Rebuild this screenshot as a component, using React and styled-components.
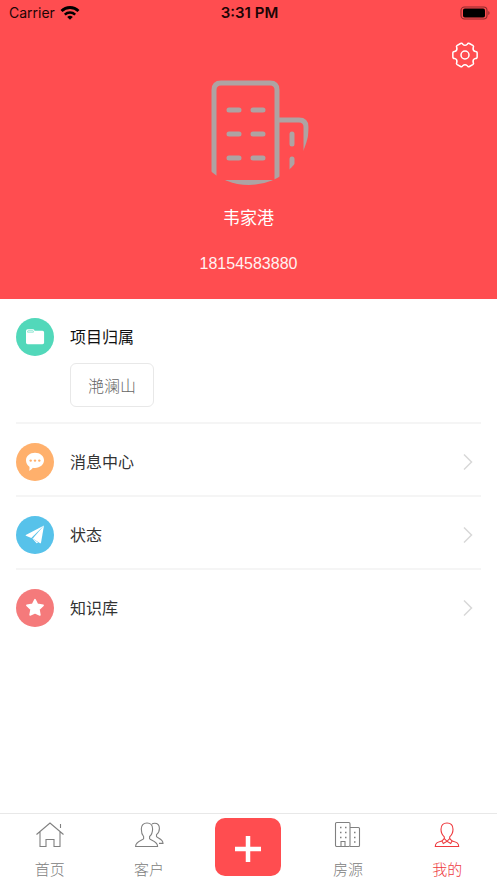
import React from "react";
import styled, { createGlobalStyle } from "styled-components";

const GlobalStyle = createGlobalStyle`
  * {
    box-sizing: border-box;
  }
  body {
    margin: 0;
    background: #fff;
    font-family: "Liberation Sans", "Noto Sans CJK SC", sans-serif;
  }
  button {
    font-family: inherit;
    border: none;
    background: none;
    padding: 0;
    cursor: pointer;
  }
  svg {
    display: block;
  }
`;

const Page = styled.div`
  min-height: 100vh;
  display: flex;
  flex-direction: column;
`;

const Header = styled.header`
  background: #ff4d50;
  color: #fff;
  padding-bottom: 23px;
`;

const StatusBar = styled.div`
  display: grid;
  grid-template-columns: 1fr auto 1fr;
  align-items: center;
  height: 25px;
  padding: 0 7px 0 9px;
  color: #1c0506;
  font-family: Inter, sans-serif;
  font-size: 14px;
`;

const Carrier = styled.span`
  display: flex;
  align-items: center;
  gap: 5px;
`;

const Clock = styled.span`
  font-size: 15px;
  font-weight: 600;
`;

const Battery = styled.span`
  justify-self: end;
`;

const Toolbar = styled.div`
  display: flex;
  justify-content: flex-end;
  align-items: flex-start;
  height: 40px;
  padding: 16px 18px 0 0;
`;

const Profile = styled.div`
  display: flex;
  flex-direction: column;
  align-items: center;
`;

const Name = styled.div`
  margin-top: 21px;
  font-size: 17px;
  line-height: 26px;
`;

const Phone = styled.div`
  margin-top: 20px;
  font-size: 16px;
  line-height: 24px;
  color: #fff2f2;
`;

const Menu = styled.main`
  flex: 1;
  padding: 0 16px;
`;

const Section = styled.section`
  padding: 19px 0 15px;
  border-bottom: 2px solid #f5f5f5;
`;

const Row = styled.div`
  display: flex;
  align-items: center;
  gap: 16px;
  width: 100%;
`;

const MenuRow = styled(Row).attrs({ as: "button", type: "button" })`
  padding: 19px 8px 14px 0;
  border-bottom: 2px solid ${(p) => (p.$last ? "transparent" : "#f5f5f5")};
`;

const Badge = styled.span`
  display: flex;
  align-items: center;
  justify-content: center;
  width: 38px;
  height: 38px;
  border-radius: 50%;
  background: ${(p) => p.$color};
`;

const Label = styled.span`
  flex: 1;
  padding-top: 2px;
  text-align: left;
  font-size: 16px;
  line-height: 24px;
  color: ${(p) => (p.$dark ? "#111" : "#333")};
`;

const Project = styled.button`
  display: block;
  height: 44px;
  margin: 7px 0 0 54px;
  && {
    padding: 0 17px;
    border: 1px solid #e8e8e8;
  }
  border-radius: 6px;
  font-size: 16px;
  font-weight: 300;
  color: #666;
`;

const TabBar = styled.nav`
  display: grid;
  grid-template-columns: repeat(5, 1fr);
  height: 70px;
  border-top: 1px solid #e8e8e8;
`;

const Tab = styled.button`
  display: flex;
  flex-direction: column;
  align-items: center;
  justify-content: flex-start;
  gap: 9px;
  && {
    padding-top: 7px;
  }
  font-size: 15px;
  font-weight: 300;
  line-height: 24px;
  color: ${(p) => (p.$active ? "#ee3a3e" : "#808080")};
`;

const AddButton = styled.button`
  display: flex;
  align-items: center;
  justify-content: center;
  justify-self: center;
  width: 66px;
  height: 58px;
  margin-top: 4px;
  && {
    padding-top: 4px;
    background: #ff4d50;
  }
  border-radius: 10px;
`;

const WifiIcon = () => (
  <svg width="20" height="14" viewBox="0 0 20 14" fill="none" stroke="#000" strokeWidth="2.8">
    <path d="M1.5 5a12.1 12.1 0 0 1 17 0" />
    <path d="M4.8 8.700a7.400 7.400 0 0 1 10.400 0" strokeWidth="2.400" />
    <path d="M10 13.800l-2.800-2.800a4 4 0 0 1 5.600 0z" fill="#000" stroke="none" />
  </svg>
);

const BatteryIcon = () => (
  <svg width="30" height="14" viewBox="0 0 30 14">
    <rect x="1" y="1" width="26" height="12" rx="3.5" fill="none" stroke="#8f2b2d" strokeWidth="1.1" />
    <rect x="3" y="2.500" width="22" height="9" rx="1.8" fill="#000" />
    <path d="M28.300 5v4c1.700-.6 1.700-3.400 0-4z" fill="#8f2b2d" />
  </svg>
);

const polar = (r, deg) => {
  const a = (deg * Math.PI) / 180;
  return `${(r * Math.cos(a)).toFixed(2)} ${(r * Math.sin(a)).toFixed(2)}`;
};

// six rounded teeth around the hub
const gearPath =
  [0, 60, 120, 180, 240, 300]
    .map(
      (t, i) =>
        `${i ? "L" : "M"}${polar(11, t - 18)}Q${polar(12.6, t - 16)} ${polar(12.3, t - 9)}` +
        `L${polar(12.3, t + 9)}Q${polar(12.6, t + 16)} ${polar(11, t + 18)}` +
        `Q${polar(8.6, t + 30)} ${polar(11, t + 42)}`
    )
    .join("") + "Z";

const GearIcon = () => (
  <svg width="28" height="28" viewBox="-14 -14 28 28" fill="none" stroke="#fff" strokeWidth="1.5">
    <path d={gearPath} strokeLinejoin="round" />
    <circle r="4" />
  </svg>
);

const BuildingLogo = () => (
  <svg width="120" height="120" viewBox="0 0 120 120" fill="none" stroke="#aea3a3" strokeWidth="5">
    <clipPath id="avatar">
      <circle cx="60" cy="60" r="60" />
    </clipPath>
    <g clipPath="url(#avatar)">
      <path d="M25 120V25q0-7 7-7h49q7 0 7 7v95" />
      <path d="M25 118h63" strokeWidth="6" />
      <path d="M88 55h22q7 0 7 7v58" />
      <path
        strokeLinecap="round"
        d="M40 45h10M64 45h10M40 69h10M64 69h10M40 93h10M64 93h10M103 69v10M103 94v18"
      />
    </g>
  </svg>
);

const ChevronIcon = () => (
  <svg width="10" height="18" viewBox="0 0 10 18" fill="none" stroke="#d8d8d8" strokeWidth="1.5">
    <path d="M1 1.500l7.500 7.500L1 16.500" />
  </svg>
);

const FolderIcon = () => (
  <svg width="20" height="18" viewBox="0 0 20 18">
    <path d="M1 3q0-1.800 1.600-1.800h5.600q1.300 0 1.300 1.600h8q1.600 0 1.600 1.600v10.400q0 1.400-1.600 1.400H2.600Q1 16.200 1 14.800z" fill="#fff" />
    <path d="M2.600 4.200V3.400q0-.7.7-.7h4.500q.6 0 .6.7v.8z" fill="none" stroke="#52d8ba" strokeWidth=".6" />
  </svg>
);

const ChatIcon = () => (
  <svg width="20" height="20" viewBox="0 0 20 20">
    <path d="M10 .8c5.100 0 9 3.200 9 7.500s-3.900 7.600-9 7.600c-.8 0-1.500-.1-2.200-.2-.8 1.400-2 2.500-3.800 3 .5-1 .7-2.500.4-4C2.300 13.300 1 11 1 8.300 1 4 4.900.8 10 .8z" fill="#fff" />
    <g fill="#ffb06c">
      <circle cx="5.7" cy="8.600" r="1.200" />
      <circle cx="10" cy="8.600" r="1.200" />
      <circle cx="14.300" cy="8.600" r="1.200" />
    </g>
  </svg>
);

const PlaneIcon = () => (
  <svg width="20" height="20" viewBox="0 0 20 20" fill="#fff">
    <path d="M19 .5L.8 10q-.4.4.1.800l5.400 2.200z" />
    <path d="M19 .5L7.800 13.400l7.200 4.800q.8.400 1-.5z" />
    <path d="M6.800 12.800l2.400 1.600 4 3.400-1.600.4z" />
  </svg>
);

const StarIcon = () => (
  <svg width="20" height="20" viewBox="0 0 20 20">
    <path
      d="M10 1.600l2.400 4.800 5.700.9-4.200 4 1 5.700-4.900-2.300-4.900 2.300 1-5.700-4.200-4 5.700-.9z"
      fill="#fff"
      stroke="#fff"
      strokeWidth="1.600"
      strokeLinejoin="round"
    />
  </svg>
);

const TabSvg = styled.svg.attrs({
  width: 30,
  height: 28,
  viewBox: "0 0 30 28",
  fill: "none",
  stroke: "currentColor",
  strokeWidth: 1.1,
})``;

const HomeIcon = () => (
  <TabSvg>
    <path d="M1.500 13.500L15 2l13.500 11.500M5 11v14.500h6v-7h8v7h6V11M25.500 3v4" />
  </TabSvg>
);

const UsersIcon = () => (
  <TabSvg>
    <path d="M13 2c3.600 0 5.600 2.400 5.600 6 0 3-.9 5.700-3 7.500v2.300c1 1.700 8 2.400 8 7.700h-22c0-5.300 7-6 8-7.700v-2.300C8 13.700 7.300 11 7.300 8c0-3.600 2.100-6 5.700-6z" />
    <path d="M18 3c.8-.6 1.700-.8 2.600-.8 3.300 0 4.800 2.200 4.800 5.400 0 2.700-.9 4.600-2.900 6v2c.8 1.500 6.500 2.300 6.500 6.800h-4" />
  </TabSvg>
);

const HousesIcon = () => (
  <TabSvg>
    <rect x="2.500" y="1.500" width="14.500" height="24" rx="1.200" />
    <path d="M17 6.500h8.500q1 0 1 1v17q0 1-1 1H17M8 25.500v-5h4v5" />
    <path
      strokeWidth="1.500"
      d="M7 6.500h1.500M12 6.500h1.500M7 11.500h1.500M12 11.500h1.500M7 16.500h1.500M12 16.500h1.500M21 11.500h1.500M21 16.500h1.500M21 21h1.500"
    />
  </TabSvg>
);

const MeIcon = () => (
  <TabSvg>
    <path d="M12.300 17.600v-1.700c-2-1.800-3.300-4.500-3.300-7.600C9 4.500 11.200 2 15 2s6 2.500 6 6.300c0 3.100-1.300 5.800-3.300 7.600v1.700L15 20.300z" />
    <path d="M12.300 17.600l-2.300 2.300 1.300 2.600 3.700-2.200 3.700 2.200 1.300-2.600-2.300-2.300M10 19.900c-4 1.200-6.700 1.600-6.700 5.600h23.400c0-4-2.700-4.400-6.700-5.600" />
  </TabSvg>
);

const PlusIcon = () => (
  <svg width="28" height="28" viewBox="0 0 28 28" stroke="#fff" strokeWidth="4.500">
    <path d="M14 1v26M1 14h26" />
  </svg>
);

const items = [
  { label: "消息中心", color: "#ffb06c", icon: <ChatIcon /> },
  { label: "状态", color: "#57c2ea", icon: <PlaneIcon /> },
  { label: "知识库", color: "#f57a7b", icon: <StarIcon /> },
];

export default function App() {
  return (
    <Page>
      <GlobalStyle />
      <Header>
        <StatusBar>
          <Carrier>
            Carrier
            <WifiIcon />
          </Carrier>
          <Clock>3:31 PM</Clock>
          <Battery>
            <BatteryIcon />
          </Battery>
        </StatusBar>
        <Toolbar>
          <button type="button" aria-label="设置">
            <GearIcon />
          </button>
        </Toolbar>
        <Profile>
          <BuildingLogo />
          <Name>韦家港</Name>
          <Phone>18154583880</Phone>
        </Profile>
      </Header>
      <Menu>
        <Section>
          <Row>
            <Badge $color="#52d8ba">
              <FolderIcon />
            </Badge>
            <Label $dark>项目归属</Label>
          </Row>
          <Project type="button">滟澜山</Project>
        </Section>
        {items.map((item, i) => (
          <MenuRow key={item.label} $last={i === items.length - 1}>
            <Badge $color={item.color}>{item.icon}</Badge>
            <Label>{item.label}</Label>
            <ChevronIcon />
          </MenuRow>
        ))}
      </Menu>
      <TabBar>
        <Tab type="button">
          <HomeIcon />
          首页
        </Tab>
        <Tab type="button">
          <UsersIcon />
          客户
        </Tab>
        <AddButton type="button" aria-label="添加">
          <PlusIcon />
        </AddButton>
        <Tab type="button">
          <HousesIcon />
          房源
        </Tab>
        <Tab type="button" $active>
          <MeIcon />
          我的
        </Tab>
      </TabBar>
    </Page>
  );
}
